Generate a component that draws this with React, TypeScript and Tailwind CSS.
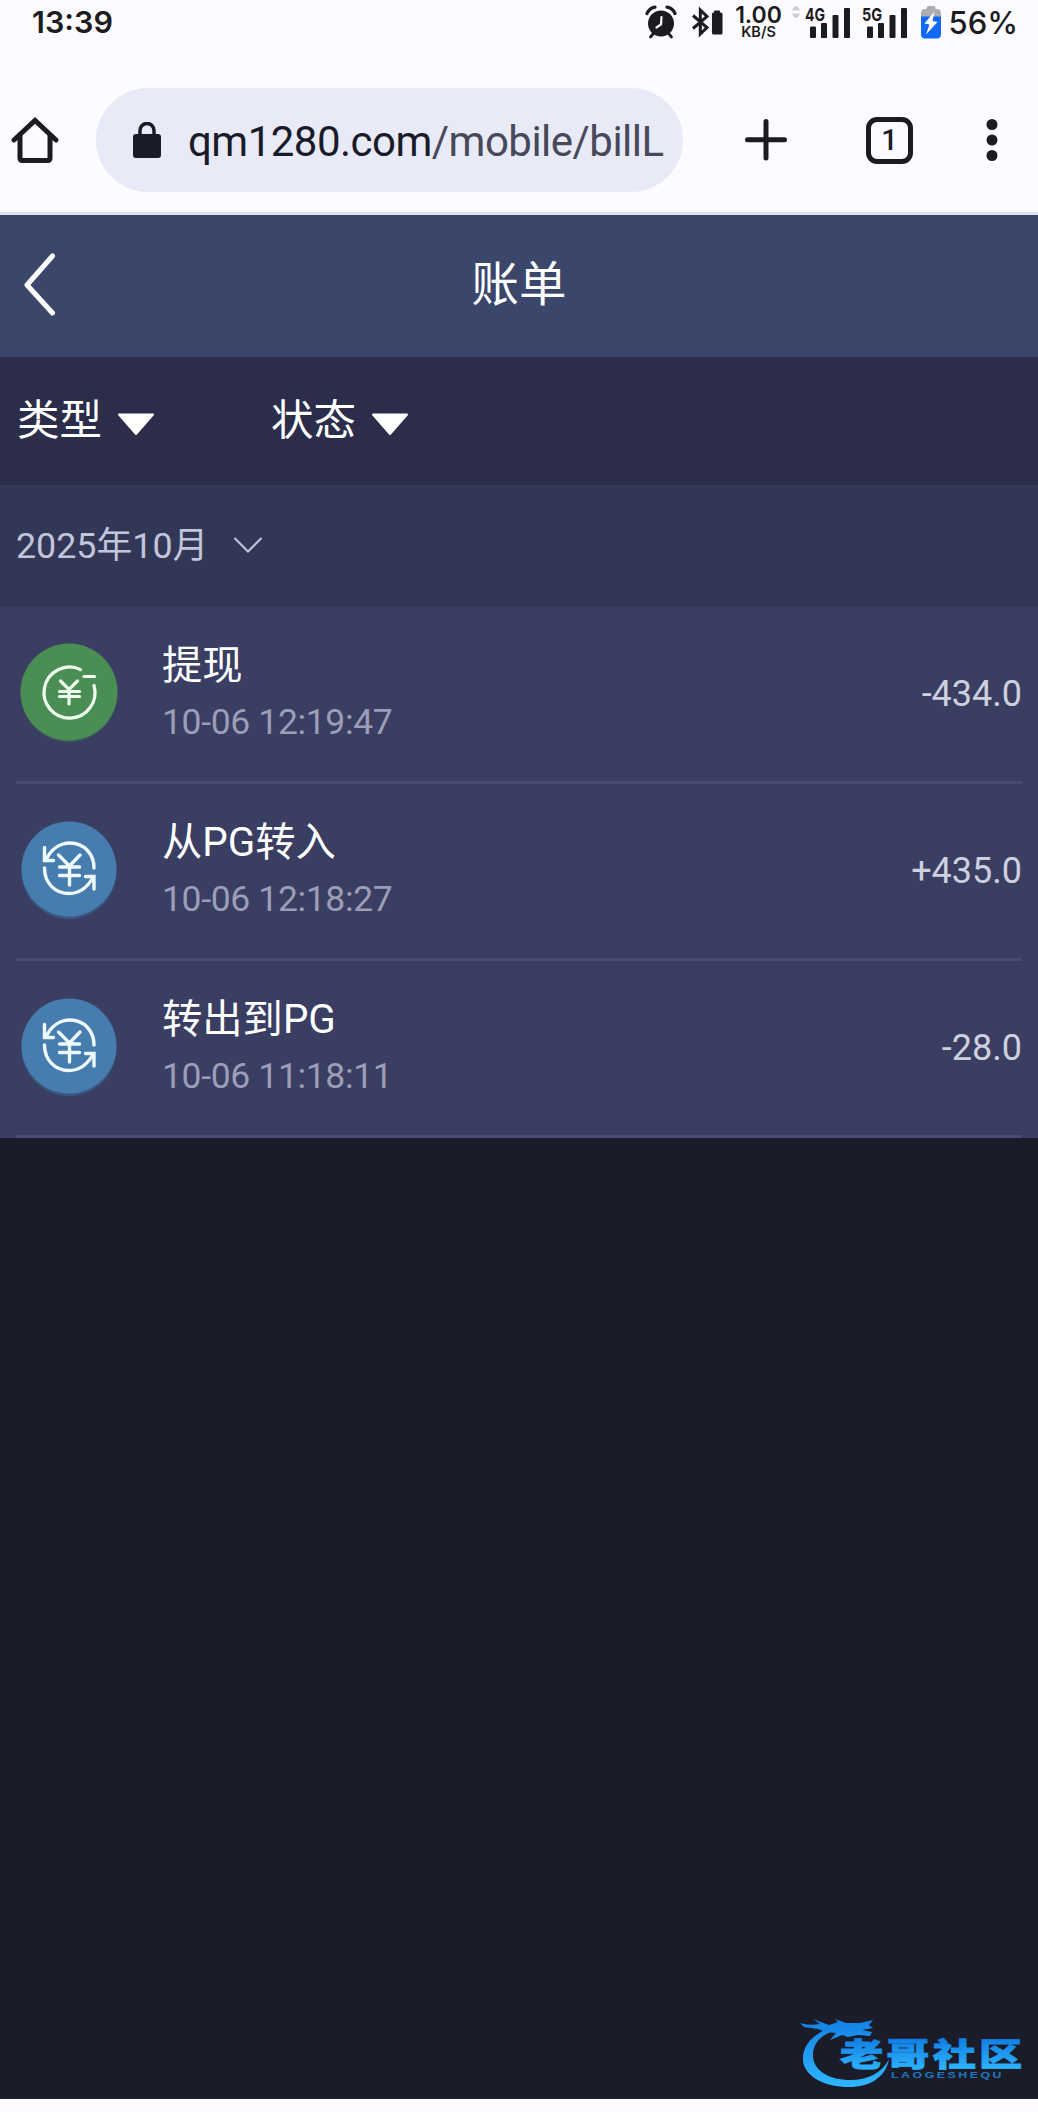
import type { ReactNode } from "react";

type Kind = "withdraw" | "transfer";

interface Bill {
  id: number;
  kind: Kind;
  title: string;
  time: string;
  amount: string;
}

const bills: Bill[] = [
  { id: 1, kind: "withdraw", title: "提现", time: "10-06 12:19:47", amount: "-434.0" },
  { id: 2, kind: "transfer", title: "从PG转入", time: "10-06 12:18:27", amount: "+435.0" },
  { id: 3, kind: "transfer", title: "转出到PG", time: "10-06 11:18:11", amount: "-28.0" },
];

function AlarmIcon() {
  return (
    <svg width="32" height="34" viewBox="0 0 32 34" className="shrink-0">
      <circle cx="16" cy="18.5" r="13" fill="#1c1b20" />
      <path d="M2 8.5 Q4.500 3 10 2.200 M30 8.500 Q27.500 3 22 2.200" fill="none" stroke="#1c1b20" strokeWidth="3.200" strokeLinecap="round" />
      <path d="M8 29 L5.500 32 M24 29 L26.500 32" stroke="#1c1b20" strokeWidth="2.800" strokeLinecap="round" />
      <path d="M16.500 12 L16 19.500 L11.500 22.500" fill="none" stroke="#fdfbff" strokeWidth="2.200" strokeLinecap="round" />
    </svg>
  );
}

function BluetoothIcon() {
  return (
    <svg width="32" height="32" viewBox="0 0 32 32" className="shrink-0">
      <path d="M2 9.500 L16 21.500 L9.300 28 V4 L16 10.500 L2 22.500" fill="none" stroke="#1c1b20" strokeWidth="3" strokeLinejoin="miter" />
      <path d="M23 5.500 Q23 4.500 24 4.500 H28 Q29 4.500 29 5.500 V6.500 H30 Q31.500 6.500 31.500 8 V27 Q31.500 28.500 30 28.500 H22.500 Q21 28.500 21 27 V8 Q21 6.500 22.500 6.500 H23 Z" fill="#1c1b20" />
    </svg>
  );
}

function Signal({ label }: { label: string }) {
  return (
    <svg width="46" height="34" viewBox="0 0 46 34" className="shrink-0">
      <text x="0" y="15.500" textLength="20" lengthAdjust="spacingAndGlyphs" className="font-['Inter'] text-[18px] font-bold" fill="#1c1b20">
        {label}
      </text>
      <g fill="#1c1b20">
        <rect x="5" y="21.500" width="6" height="11.500" rx="1" />
        <rect x="16" y="18" width="6" height="15" rx="1" />
        <rect x="27.500" y="10" width="6" height="23" rx="1" />
        <rect x="39" y="3" width="6" height="30" rx="1" />
      </g>
    </svg>
  );
}

function BatteryIcon() {
  return (
    <svg width="20" height="34" viewBox="0 0 20 34" className="shrink-0">
      <path d="M5.500 4 V3 Q5.500 1 7.500 1 H12.500 Q14.500 1 14.500 3 V4 H16 Q20 4 20 8 V14 H0 V8 Q0 4 4 4 Z" fill="#adacb0" />
      <path d="M0 11.500 H20 V29 Q20 33.500 16 33.500 H4 Q0 33.500 0 29 Z" fill="#1269f5" />
      <path d="M13.500 6.500 L3.500 18.500 L8.500 19.500 L5 29.500 L16.500 17 L11.500 16 Z" fill="#fff" />
    </svg>
  );
}

function StatusBar() {
  return (
    <div className="flex h-[44px] items-center pl-8 pr-5 text-[#1c1b20] font-['Inter',sans-serif]">
      <span className="text-[30.500px] leading-[44px] font-semibold">13:39</span>
      <div className="ml-auto flex h-[44px] items-center">
        <AlarmIcon />
        <span className="ml-[14px] flex">
          <BluetoothIcon />
        </span>
        <div className="ml-3 flex w-[48px] flex-col items-center">
          <span className="text-[23px] leading-[18px] font-semibold">1.00</span>
          <span className="text-[14.500px] leading-[15px] font-semibold">KB/S</span>
        </div>
        <svg width="8" height="14" viewBox="0 0 8 14" className="mb-5 ml-[9px]">
          <path d="M0 5.500 Q0 4 4 0.500 Q8 4 8 5.500 Z M0 8.500 Q0 10 4 13.500 Q8 10 8 8.500 Z" fill="#cfcdd2" />
        </svg>
        <span className="ml-[5px] flex">
          <Signal label="4G" />
        </span>
        <span className="ml-[11px] flex">
          <Signal label="5G" />
        </span>
        <span className="ml-[13px] flex">
          <BatteryIcon />
        </span>
        <span className="ml-2 pt-0.5 text-[31px] leading-[44px] font-medium">56%</span>
      </div>
    </div>
  );
}

function BrowserBar() {
  return (
    <div className="flex h-[168px] items-start pt-[44px] pl-[11px]">
      <svg width="48" height="104" viewBox="0 0 48 104" className="shrink-0" fill="none" stroke="#1c1b20" strokeWidth="5">
        <path d="M3 52 L24 32.500 L45 52" strokeLinecap="round" />
        <path d="M9 47 V70 Q9 72.500 11.500 72.500 H36.500 Q39 72.500 39 70 V47" />
      </svg>
      <div className="ml-[37px] flex h-[104px] w-[587px] items-center overflow-hidden rounded-full bg-[#e8eaf8] pl-[37px]">
        <svg width="28" height="36" viewBox="0 0 28 36" className="shrink-0">
          <rect x="0" y="12" width="28" height="24" rx="3" fill="#1a1b29" />
          <path d="M7 14 V8.500 A7 7 0 0 1 21 8.500 V14" fill="none" stroke="#1a1b29" strokeWidth="3.500" />
        </svg>
        <span className="mt-[3px] ml-[27px] text-[42px] leading-[101px] tracking-[-0.520px] whitespace-nowrap text-[#474858] font-['Roboto',sans-serif]">
          <span className="text-[#1a1b29]">qm1280.com</span>/mobile/billL
        </span>
      </div>
      <svg width="44" height="104" viewBox="0 0 44 104" className="ml-[61px] shrink-0">
        <path d="M22 33.500 V70 M3.500 51.700 H40.500" stroke="#1c1b20" strokeWidth="5" strokeLinecap="round" />
      </svg>
      <div className="mt-[29px] ml-[78px] flex h-[47px] w-[47px] shrink-0 items-center justify-center rounded-[11px] border-[5px] border-[#1c1b20] text-[29px] leading-none font-medium text-[#1c1b20] font-['Roboto',sans-serif]">
        1
      </div>
      <svg width="12" height="104" viewBox="0 0 12 104" className="ml-[73px] shrink-0" fill="#1c1b20">
        <circle cx="6" cy="36.500" r="5.500" />
        <circle cx="6" cy="52" r="5.500" />
        <circle cx="6" cy="67.500" r="5.500" />
      </svg>
    </div>
  );
}

function FilterButton({ children }: { children: ReactNode }) {
  return (
    <button className="flex w-[254px] items-center text-[42.500px] leading-[60px] text-white">
      {children}
      <svg width="38" height="23" viewBox="0 0 38 23" className="mt-[7px] ml-[15px]">
        <path d="M2 1.500 H36 L19 21 Z" fill="#fff" stroke="#fff" strokeWidth="2" strokeLinejoin="round" />
      </svg>
    </button>
  );
}

function BillIcon({ kind }: { kind: Kind }) {
  if (kind === "withdraw") {
    return (
      <svg width="106" height="106" viewBox="0 0 106 106" className="shrink-0">
        <circle cx="53" cy="54.500" r="48.500" fill="#3f7a57" opacity="0.500" />
        <circle cx="53" cy="53" r="48.500" fill="#4b8e54" />
        <g fill="none" stroke="#effff0" strokeWidth="3.200" strokeLinecap="round">
          <path d="M64.500 30.600 A25.500 25.500 0 1 0 78 46.500" />
          <path d="M68 37.500 H78.500" />
          <path d="M44.500 42 L53 50.500 L61.500 42 M53 50.500 V65 M43.500 52.500 H63.500 M43.500 57.500 H63.500" />
        </g>
      </svg>
    );
  }
  return (
    <svg width="106" height="106" viewBox="0 0 106 106" className="shrink-0">
      <circle cx="53" cy="55.500" r="47.500" fill="#3a6894" opacity="0.600" />
      <circle cx="53" cy="53" r="47.500" fill="#477cae" />
      <g fill="none" stroke="#effaff" strokeWidth="3.400" strokeLinecap="round">
        <path d="M30 44 C35 33 44 27 54 27 C68 27 78 38 78 52" />
        <path d="M28.500 31.500 V44.500 H37.500" />
        <path d="M28.500 52 C28.500 67 39 77.500 53 77.500 C63 77.500 71 72 77 61.500" />
        <path d="M69.500 60.500 H78 V73" />
        <path d="M42.500 39 L53.500 50 L64 39 M53.500 50 V69 M43.500 51 H63.500 M43.500 59.500 H63.500" />
      </g>
    </svg>
  );
}

function BillRow({ bill }: { bill: Bill }) {
  return (
    <li className="mx-4 flex h-[177px] items-start border-b-[3px] border-[#484c70]">
      <span className="mt-[32px] flex">
        <BillIcon kind={bill.kind} />
      </span>
      <div className="ml-[40px] pt-[31px]">
        <p className="text-[40.300px] leading-[56px] text-white">{bill.title}</p>
        <p className="text-[35.500px] leading-[56px] tracking-[-0.350px] text-[#9c9db7]">{bill.time}</p>
      </div>
      <span className="mt-[57px] ml-auto text-[36px] leading-[60px] text-[#ced0df]">{bill.amount}</span>
    </li>
  );
}

function Watermark() {
  return (
    <svg width="226" height="76" viewBox="0 0 226 76">
      <defs>
        <linearGradient id="ring" x1="0" y1="0" x2="0" y2="76" gradientUnits="userSpaceOnUse">
          <stop offset="0.100" stopColor="#1583e6" />
          <stop offset="0.900" stopColor="#2db4fb" />
        </linearGradient>
        <linearGradient id="name" x1="0" y1="-28" x2="0" y2="2" gradientUnits="userSpaceOnUse">
          <stop offset="0" stopColor="#0f7ce2" />
          <stop offset="1" stopColor="#2cb0fa" />
        </linearGradient>
      </defs>
      <g fill="url(#ring)">
        {/* tail ring */}
        <path d="M30 13 C10 20 2 33 3 46 C5 62 25 72 49 72 C70 72 86 62 89 44 C82 58 68 65 50 65 C30 65 14 56 13 42 C12 30 20 20 34 16 Z" />
        {/* dragon head */}
        <path d="M0 8 Q8 11 20 9 L13 4 Q24 8 29 10 L38 7 L35 4 L46 8 L60 8 L73 5 L69 10 L73 13 L62 15 L72 17 L70 21 L58 20 L48 22 L42 20 L30 25 L36 18 L26 17 L18 14 L4 12 Z" />
      </g>
      <text
        transform="translate(40 50.500) scale(1.350 1)"
        textLength="135"
        lengthAdjust="spacing"
        fill="url(#name)"
        stroke="url(#name)"
        strokeWidth="0.800"
        className="font-['Noto_Sans_CJK_SC',sans-serif] text-[32px] font-black"
      >
        老哥社区
      </text>
      <text
        transform="translate(91 63) scale(1.300 1)"
        textLength="85"
        lengthAdjust="spacing"
        fill="#1f78bd"
        className="font-['Liberation_Sans',sans-serif] text-[9.500px] font-bold"
      >
        LAOGESHEQU
      </text>
    </svg>
  );
}

export default function App() {
  return (
    <div className="flex h-[2112px] w-[1038px] flex-col overflow-hidden bg-[#fdfbff] font-['Roboto','Noto_Sans_CJK_SC',sans-serif]">
      <StatusBar />
      <BrowserBar />
      <main className="flex h-[1887px] flex-col border-t-[3px] border-[#dee0f3] bg-[#1a1c29]">
        <header className="grid h-[142px] shrink-0 grid-cols-3 items-center bg-[#3b466b] pl-[23px]">
          <svg width="34" height="66" viewBox="0 0 34 66" className="mb-[3px]">
            <path d="M29.500 4 L4 33 L29.500 61" fill="none" stroke="#fff" strokeWidth="5" strokeLinecap="round" strokeLinejoin="round" />
          </svg>
          <h1 className="pr-[23px] pb-[3px] text-center text-[47.500px] leading-[64px] text-white">账单</h1>
        </header>

        <div className="flex h-[128px] shrink-0 items-center bg-[#2b2d4a] pl-[17px]">
          <FilterButton>类型</FilterButton>
          <FilterButton>状态</FilterButton>
        </div>

        <div className="flex h-[122px] shrink-0 items-center bg-[#323757] pl-4 text-[35.800px] leading-[56px] text-[#c3c6d9]">
          2025年10月
          <svg width="30" height="18" viewBox="0 0 30 18" className="mb-0.5 ml-[25px]">
            <path d="M1.500 2 L15 15.500 L28.500 2" fill="none" stroke="#c3c6d9" strokeWidth="2" />
          </svg>
        </div>

        <ul className="shrink-0 bg-[#393e62]">
          {bills.map((bill) => (
            <BillRow key={bill.id} bill={bill} />
          ))}
        </ul>

        <div className="mt-auto flex justify-end pr-[12px] pb-[8px]">
          <Watermark />
        </div>
      </main>
    </div>
  );
}
